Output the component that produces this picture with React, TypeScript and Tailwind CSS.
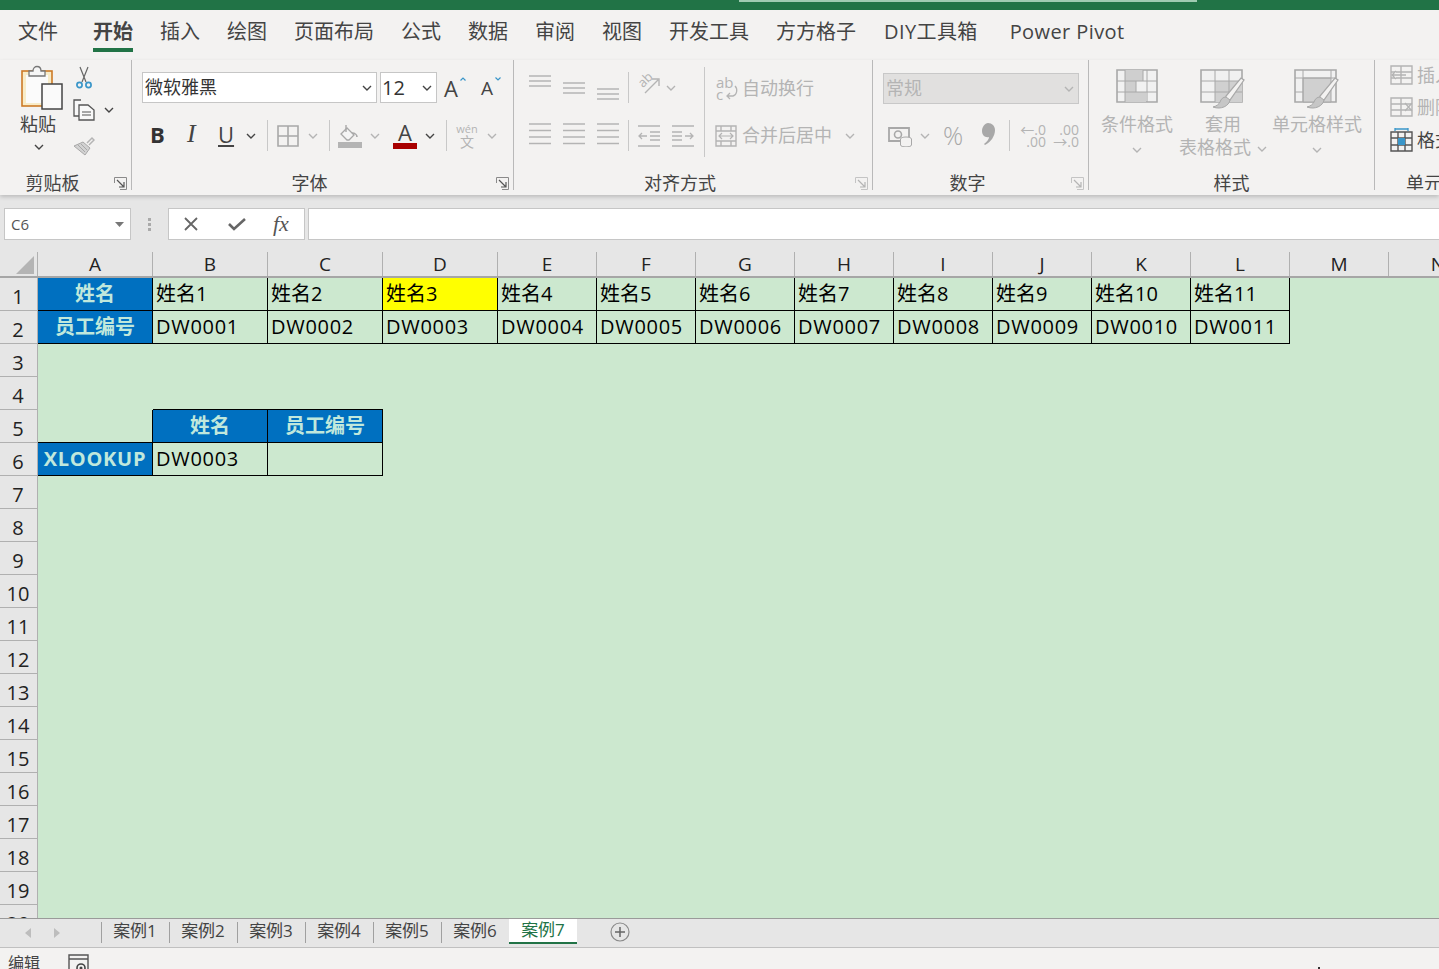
import type { ReactNode } from 'react'

const DIS = '#b4b4b4'
const DARK = '#444444'

const tabs = ['文件', '开始', '插入', '绘图', '页面布局', '公式', '数据', '审阅', '视图', '开发工具', '方方格子', 'DIY工具箱', 'Power Pivot']

function Chevron({ color = DARK, className = '' }: { color?: string; className?: string }) {
  return (
    <svg width="10" height="6" viewBox="0 0 10 6" className={className}>
      <path d="M1 1l4 4 4-4" fill="none" stroke={color} strokeWidth="1.4" />
    </svg>
  )
}

function Launcher({ off }: { off?: boolean }) {
  return (
    <svg width="13" height="13" viewBox="0 0 13 13" className="absolute right-[4px] top-[6px]">
      <path d="M.5 6V.5H12.5V12.5H6" fill="none" stroke={off ? '#c4c4c4' : '#8a8a8a'} />
      <path d="M3 3l7 7M10 5v5H5" fill="none" stroke={off ? DIS : '#555'} strokeWidth="1.2" />
    </svg>
  )
}

function Group({ label, w, launcher, off, children }: { label: string; w: string; launcher?: boolean; off?: boolean; children: ReactNode }) {
  return (
    <div className={`${w} shrink-0 h-[130px] flex flex-col border-r border-[#b9b9b9]`}>
      <div className="h-[111px] flex shrink-0">{children}</div>
      <div className={`relative flex-1 text-center text-[18px] leading-[24px] text-[#444] ${launcher ? 'pr-[26px]' : ''}`}>
        {label}
        {launcher && <Launcher off={off} />}
      </div>
    </div>
  )
}

function VSep({ className = 'h-[31px]' }: { className?: string }) {
  return <div className={`w-px bg-[#c8c8c8] shrink-0 ${className}`} />
}

function Lines({ starts, top, gap }: { starts: number[]; top: number; gap: number }) {
  return (
    <svg width="22" height="31" viewBox="0 0 22 31" className="shrink-0">
      {starts.map((s, i) => (
        <path key={i} d={`M${s} ${top + i * gap}H22`} stroke={DIS} strokeWidth="1.5" />
      ))}
    </svg>
  )
}

function PasteIcon() {
  return (
    <svg width="42" height="45" viewBox="0 0 42 45">
      <rect x="1" y="6" width="30" height="35" fill="#f8ecc8" stroke="#cc7a26" strokeWidth="1.6" />
      <rect x="5" y="10" width="22" height="28" fill="#fbfbfb" />
      <path d="M8 6h4c0-6 8-6 8 0h4v5H8z" fill="#f6f6f6" stroke="#777" strokeWidth="1.3" />
      <rect x="21" y="19" width="20" height="25" fill="#fafafa" stroke="#444" strokeWidth="1.5" />
    </svg>
  )
}

function ScissorIcon() {
  return (
    <svg width="18" height="24" viewBox="0 0 18 24">
      <path d="M5 1l6 15M13 1L7 16" stroke="#666" strokeWidth="1.2" fill="none" />
      <circle cx="4.5" cy="19" r="2.6" fill="none" stroke="#3a96c9" strokeWidth="1.7" />
      <circle cx="13.5" cy="19" r="2.6" fill="none" stroke="#3a96c9" strokeWidth="1.7" />
    </svg>
  )
}

function CopyIcon() {
  return (
    <svg width="22" height="22" viewBox="0 0 22 22">
      <path d="M8 1H1v16h5" fill="#f8f8f8" stroke="#555" strokeWidth="1.3" />
      <path d="M6 6h9l6 5v10H6z" fill="#f8f8f8" stroke="#555" strokeWidth="1.3" />
      <path d="M9 13h9M9 16h9" stroke="#555" />
    </svg>
  )
}

function BrushIcon() {
  return (
    <svg width="22" height="20" viewBox="0 0 22 20">
      <path d="M14 7l5-5 2 2-5 5" fill="none" stroke={DIS} strokeWidth="1.5" />
      <path d="M1 10l9-4 7 6-5 7z" fill="#d2d2d2" stroke="#a8a8a8" />
      <path d="M5 9l7 7M8 8l6 6" stroke="#a8a8a8" />
    </svg>
  )
}

function BorderIcon() {
  return (
    <svg width="22" height="22" viewBox="0 0 22 22">
      <path d="M1 1h20v20H1zM11 1v20M1 11h20" fill="none" stroke="#a8a8a8" strokeWidth="1.6" />
    </svg>
  )
}

function FillIcon() {
  return (
    <svg width="24" height="24" viewBox="0 0 24 24">
      <path d="M3 10l6-6 7 7-5 5H9z" fill="#f4f4f4" stroke="#a8a8a8" strokeWidth="1.3" />
      <path d="M8 1v7" stroke="#a8a8a8" strokeWidth="1.4" />
      <path d="M14 9c3 0 5 2 5 4" fill="none" stroke="#a8a8a8" strokeWidth="1.6" />
      <rect y="18" width="24" height="6" fill={DIS} />
    </svg>
  )
}

function OrientIcon() {
  return (
    <svg width="22" height="24" viewBox="0 0 22 24">
      <text x="1" y="13" fontSize="13" fill={DIS} transform="rotate(-45 7 10)" fontFamily="Open Sans">ab</text>
      <path d="M7 21L20 8M14 7h7v7" fill="none" stroke={DIS} strokeWidth="1.4" />
    </svg>
  )
}

function IndentIcon({ flip }: { flip?: boolean }) {
  return (
    <svg width="22" height="22" viewBox="0 0 22 22" className={flip ? '-scale-x-100' : ''}>
      <path d="M0 1h22M12 7h10M12 11h10M12 15h10M0 21h22" stroke={DIS} strokeWidth="1.4" />
      <path d="M9 11H1M4 8l-3 3 3 3" fill="none" stroke={DIS} strokeWidth="1.3" />
    </svg>
  )
}

function WrapIcon() {
  return (
    <svg width="22" height="24" viewBox="0 0 22 24" className="shrink-0">
      <text x="0" y="11" fontSize="15" fill={DIS} fontFamily="Open Sans">ab</text>
      <text x="0" y="23" fontSize="15" fill={DIS} fontFamily="Open Sans">c</text>
      <path d="M19 9c3 3 2 9-2 10h-6M14 16l-3 3 3 3" fill="none" stroke={DIS} strokeWidth="1.3" />
    </svg>
  )
}

function MergeIcon() {
  return (
    <svg width="22" height="22" viewBox="0 0 22 22" className="shrink-0 -ml-[1px]">
      <path d="M1 1h20v20H1zM1 6h20M1 16h20M6 1v5M6 16v5M16 1v5M16 16v5" fill="none" stroke={DIS} strokeWidth="1.4" />
      <path d="M4 11h14M7 8l-3 3 3 3M15 8l3 3-3 3" fill="none" stroke={DIS} strokeWidth="1.2" />
    </svg>
  )
}

function MoneyIcon() {
  return (
    <svg width="24" height="22" viewBox="0 0 24 22">
      <path d="M1 3h20v13H1z" fill="none" stroke="#a8a8a8" strokeWidth="1.8" />
      <circle cx="10" cy="9.5" r="3.5" fill="none" stroke="#a8a8a8" strokeWidth="1.6" />
      <ellipse cx="18" cy="14" rx="5.5" ry="2" fill="#f3f2f1" stroke="#a8a8a8" />
      <path d="M12.500 14v6c0 2.500 11 2.500 11 0v-6" fill="#f3f2f1" stroke="#a8a8a8" />
    </svg>
  )
}

function CommaIcon() {
  return (
    <svg width="13" height="22" viewBox="0 0 13 22">
      <path d="M6 0c4 0 7 3 7 7 0 6-4 12-10 15l-1-1c3-2 5-5 5-7-4 1-7-2-7-6 0-4 3-8 6-8z" fill="#a8a8a8" />
    </svg>
  )
}

function CondIcon() {
  return (
    <svg width="42" height="34" viewBox="0 0 42 34">
      <path d="M1 1h40v32H1z" fill="#f1f1f1" stroke="#a8a8a8" strokeWidth="1.6" />
      <path d="M9 1h18v11H9zM9 12h11v11H9zM9 23h21v10H9z" fill="#cfcfcf" />
      <path d="M9 1v32M31 1v32M1 12h40M1 23h40M20 12v11M27 1v11" stroke="#a8a8a8" fill="none" />
    </svg>
  )
}

function TableBrush({ cell }: { cell?: boolean }) {
  return (
    <svg width="46" height="42" viewBox="0 0 46 42">
      <path d="M1 1h41v32H1z" fill="#f1f1f1" stroke="#a8a8a8" strokeWidth="1.6" />
      {cell ? (
        <path d="M9 9h28v24H9z" fill="#d0d0d0" stroke="#a8a8a8" />
      ) : (
        <path d="M15 12h27v21H15z" fill="#d0d0d0" />
      )}
      {cell ? (
        <path d="M1 9h41M9 1v32M37 1v8M1 23h8" stroke="#a8a8a8" fill="none" />
      ) : (
        <path d="M1 12h41M1 23h41M15 1v32M29 1v32" stroke="#a8a8a8" fill="none" />
      )}
      <path d="M44 11L30 31c-3 1-5-2-4-4L41 9z" fill="#f3f2f1" stroke="#a8a8a8" strokeWidth="1.3" />
      <path d="M26 28c-3 0-5 2-6 5-1 2-3 4-7 5 8 3 16-1 17-7z" fill="#c6c6c6" stroke="#a8a8a8" />
    </svg>
  )
}

function CellIcon({ kind }: { kind: 'insert' | 'delete' | 'format' }) {
  if (kind === 'format') {
    return (
      <svg width="23" height="24" viewBox="0 0 23 24" className="shrink-0">
        <path d="M5 1h13M5 0v3M18 0v3" stroke="#3a96c9" strokeWidth="1.3" />
        <path d="M1 4h21v19H1zM1 10h21M1 17h21M8 4v19M15 4v19" fill="none" stroke="#555" strokeWidth="1.4" />
        <rect x="8" y="10" width="7" height="7" fill="#3a96c9" />
      </svg>
    )
  }
  return (
    <svg width="23" height="20" viewBox="0 0 23 20" className="shrink-0">
      <path d="M1 1h21v18H1zM1 7h21M1 13h21M11 1v18" fill="none" stroke={DIS} strokeWidth="1.4" />
      {kind === 'insert' ? (
        <path d="M16 10H2M6 6l-4 4 4 4" fill="#f3f2f1" stroke={DIS} strokeWidth="1.3" />
      ) : (
        <path d="M15 6l7 8M22 6l-7 8" stroke={DIS} strokeWidth="1.3" fill="none" />
      )}
    </svg>
  )
}

function Ribbon() {
  return (
    <div className="h-[135px] flex shrink-0 shadow-[0_2px_4px_rgba(0,0,0,0.18)] relative z-10 bg-[#f3f2f1]">
      <Group label="剪贴板" w="w-[132px]" launcher>
        <div className="w-[73px] flex flex-col items-center pl-[11px] pt-[5px] shrink-0">
          <PasteIcon />
          <div className="text-[18px] leading-[24px] mt-[2px] mr-[8px] text-[#444]">粘贴</div>
          <Chevron className="mt-[8px] mr-[6px]" />
        </div>
        <div className="flex flex-col pt-[6px]">
          <div className="pl-[2px]"><ScissorIcon /></div>
          <div className="flex items-center mt-[9px]">
            <CopyIcon />
            <Chevron className="ml-[9px]" />
          </div>
          <div className="mt-[15px]"><BrushIcon /></div>
        </div>
      </Group>

      <Group label="字体" w="w-[382px]" launcher>
        <div className="flex flex-col pl-[10px] pt-[12px]">
          <div className="flex items-center h-[31px]">
            <div className="w-[235px] h-[31px] bg-white border border-[#c6c6c6] flex items-center justify-between pl-[2px] pr-[4px] text-[18px] text-[#333]">
              <span>微软雅黑</span>
              <Chevron />
            </div>
            <div className="w-[57px] h-[31px] ml-[3px] bg-white border border-[#c6c6c6] flex items-center justify-between pl-[1px] pr-[4px] text-[20px] text-[#333]">
              <span>12</span>
              <Chevron />
            </div>
            <div className="relative ml-[7px] w-[22px] text-[22px] leading-[24px] text-[#444]">
              A
              <svg width="6" height="4" viewBox="0 0 6 4" className="absolute left-[16px] top-[1px]"><path d="M.5 3.500L3 1l2.500 2.500" fill="none" stroke="#3a96c9" strokeWidth="1.2" /></svg>
            </div>
            <div className="relative ml-[15px] w-[20px] text-[19px] leading-[24px] text-[#444]">
              A
              <svg width="6" height="4" viewBox="0 0 6 4" className="absolute left-[14px] top-[1px]"><path d="M.5 .5L3 3l2.500-2.500" fill="none" stroke="#3a96c9" strokeWidth="1.2" /></svg>
            </div>
          </div>
          <div className="flex items-center h-[31px] mt-[17px]">
            <span className="ml-[8px] w-[16px] mb-[4px] text-[22px] font-bold text-[#333] leading-none">B</span>
            <span className="ml-[19px] w-[14px] mb-[4px] pl-[2px] text-[26px] italic text-[#444] leading-none font-['Liberation_Serif',serif]">I</span>
            <span className="ml-[19px] w-[17px] mb-[4px] text-[22px] underline underline-offset-2 text-[#444] leading-none">U</span>
            <Chevron className="ml-[11px]" />
            <VSep className="h-[31px] ml-[11px]" />
            <div className="ml-[9px]"><BorderIcon /></div>
            <Chevron color={DIS} className="ml-[9px]" />
            <VSep className="h-[31px] ml-[11px]" />
            <div className="ml-[8px]"><FillIcon /></div>
            <Chevron color={DIS} className="ml-[8px]" />
            <div className="ml-[13px] w-[24px] flex flex-col items-center leading-none">
              <span className="text-[22px] leading-[20px] text-[#444]">A</span>
              <span className="w-[24px] h-[6px] bg-[#a80000] mt-[1px]" />
            </div>
            <Chevron className="ml-[8px]" />
            <VSep className="h-[31px] ml-[11px]" />
            <div className="ml-[10px] w-[20px] flex flex-col items-center text-[#b4b4b4]">
              <span className="text-[11px] leading-[11px]">wén</span>
              <span className="text-[14px] leading-[15px]">文</span>
            </div>
            <Chevron color={DIS} className="ml-[10px]" />
          </div>
        </div>
      </Group>

      <Group label="对齐方式" w="w-[359px]" launcher off>
        <div className="flex flex-col pl-[15px] pt-[12px]">
          <div className="flex h-[31px]">
            <Lines starts={[0, 0, 0]} top={4} gap={5} />
            <div className="ml-[12px]"><Lines starts={[0, 0, 0]} top={11} gap={5} /></div>
            <div className="ml-[12px]"><Lines starts={[0, 0, 0]} top={17} gap={5} /></div>
            <VSep className="h-[31px] ml-[9px]" />
            <div className="ml-[9px]"><OrientIcon /></div>
            <Chevron color={DIS} className="ml-[6px] mt-[13px]" />
          </div>
          <div className="flex items-center h-[31px] mt-[17px]">
            <Lines starts={[0, 0, 0, 0]} top={4} gap={6.5} />
            <div className="ml-[12px]"><Lines starts={[0, 0, 0, 0]} top={4} gap={6.5} /></div>
            <div className="ml-[12px]"><Lines starts={[0, 0, 0, 0]} top={4} gap={6.5} /></div>
            <VSep className="h-[31px] ml-[9px]" />
            <div className="ml-[9px]"><IndentIcon /></div>
            <div className="ml-[12px]"><IndentIcon flip /></div>
          </div>
        </div>
        <VSep className="h-[90px] mt-[7px] ml-[10px]" />
        <div className="flex flex-col pl-[11px] pt-[12px] text-[18px] text-[#b4b4b4]">
          <div className="flex items-center h-[31px] gap-[4px] pt-[2px]">
            <WrapIcon />
            <span>自动换行</span>
          </div>
          <div className="flex items-center h-[31px] mt-[17px] gap-[5px]">
            <MergeIcon />
            <span>合并后居中</span>
            <Chevron color={DIS} className="ml-[8px]" />
          </div>
        </div>
      </Group>

      <Group label="数字" w="w-[216px]" launcher off>
        <div className="flex flex-col pl-[10px] pt-[13px]">
          <div className="w-[196px] h-[31px] bg-[#e1e0df] border border-[#c8c8c8] flex items-center justify-between pl-[2px] pr-[4px] text-[18px] text-[#b4b4b4]">
            <span>常规</span>
            <Chevron color={DIS} />
          </div>
          <div className="flex items-center h-[31px] mt-[16px] text-[#b4b4b4]">
            <div className="ml-[5px]"><MoneyIcon /></div>
            <Chevron color={DIS} className="ml-[8px]" />
            <span className="ml-[13px] w-[23px] text-[25px] leading-none text-[#a8a8a8] font-light">%</span>
            <div className="ml-[16px] mb-[4px]"><CommaIcon /></div>
            <VSep className="h-[31px] ml-[14px]" />
            <div className="ml-[10px] w-[26px] text-[14px] leading-[12px] text-right">
              <div>←.0</div>
              <div>.00</div>
            </div>
            <div className="ml-[7px] w-[26px] text-[14px] leading-[12px] text-right">
              <div>.00</div>
              <div>→.0</div>
            </div>
          </div>
        </div>
      </Group>

      <Group label="样式" w="w-[286px]">
        <div className="flex text-[18px] leading-[23px] text-[#b4b4b4] pt-[9px]">
          <div className="w-[96px] flex flex-col items-center">
            <CondIcon />
            <span className="mt-[10px]">条件格式</span>
            <Chevron color={DIS} className="mt-[11px]" />
          </div>
          <div className="w-[76px] flex flex-col items-center">
            <TableBrush />
            <span className="mt-[2px]">套用</span>
            <span className="whitespace-nowrap">表格格式<Chevron color={DIS} className="inline ml-[6px]" /></span>
          </div>
          <div className="w-[112px] flex flex-col items-center">
            <TableBrush cell />
            <span className="mt-[2px] whitespace-nowrap">单元格样式</span>
            <Chevron color={DIS} className="mt-[11px]" />
          </div>
        </div>
      </Group>

      <div className="flex-1 h-[130px] flex flex-col overflow-hidden">
        <div className="h-[111px] shrink-0 flex flex-col pl-[15px] pt-[5px] text-[18px] whitespace-nowrap">
          <div className="flex items-center gap-[4px] h-[20px] text-[#b4b4b4]"><CellIcon kind="insert" />插入</div>
          <div className="flex items-center gap-[4px] h-[20px] mt-[12px] text-[#b4b4b4]"><CellIcon kind="delete" />删除</div>
          <div className="flex items-center gap-[4px] h-[24px] mt-[11px] text-[#444]"><CellIcon kind="format" />格式</div>
        </div>
        <div className="text-[18px] leading-[24px] text-[#444] pl-[31px] whitespace-nowrap">单元格</div>
      </div>
    </div>
  )
}

function FormulaBar() {
  return (
    <div className="h-[53px] shrink-0 flex items-start pt-[13px] pl-[4px] bg-[#e6e6e6] text-[#555]">
      <div className="w-[127px] h-[32px] bg-white border border-[#c6c6c6] flex items-center justify-between pl-[6px] pr-[6px] text-[15px]">
        <span>C6</span>
        <svg width="9" height="5" viewBox="0 0 9 5"><path d="M0 0h9L4.500 5z" fill="#777" /></svg>
      </div>
      <div className="w-[37px] h-[32px] flex flex-col items-center justify-center gap-[2px]">
        <span className="w-[3px] h-[3px] bg-[#aaa]" />
        <span className="w-[3px] h-[3px] bg-[#aaa]" />
        <span className="w-[3px] h-[3px] bg-[#aaa]" />
      </div>
      <div className="w-[137px] h-[32px] bg-white border border-[#c6c6c6] flex items-center pl-[14px]">
        <svg width="16" height="16" viewBox="0 0 16 16"><path d="M2 2l12 12M14 2L2 14" stroke="#666" strokeWidth="1.8" /></svg>
        <svg width="18" height="14" viewBox="0 0 18 14" className="ml-[29px]"><path d="M1 7l5 5L17 2" fill="none" stroke="#666" strokeWidth="2.6" /></svg>
        <span className="ml-[27px] text-[22px] leading-none italic font-['Liberation_Serif',serif] text-[#555]">fx</span>
      </div>
      <div className="flex-1 h-[32px] ml-[3px] -mr-[2px] bg-white border border-[#c6c6c6]" />
    </div>
  )
}

type Cell = { text?: string; tone?: 'blue' | 'yellow'; r?: boolean; b?: boolean; wide?: boolean }

const names = ['姓名1', '姓名2', '姓名3', '姓名4', '姓名5', '姓名6', '姓名7', '姓名8', '姓名9', '姓名10', '姓名11']
const ids = ['DW0001', 'DW0002', 'DW0003', 'DW0004', 'DW0005', 'DW0006', 'DW0007', 'DW0008', 'DW0009', 'DW0010', 'DW0011']
const colLetters = ['A', 'B', 'C', 'D', 'E', 'F', 'G', 'H', 'I', 'J', 'K', 'L', 'M', 'N']

const empty = (n: number): Cell[] => Array.from({ length: n }, () => ({}))

const rows: Cell[][] = [
  [{ text: '姓名', tone: 'blue', r: true, b: true }, ...names.map((t, i) => ({ text: t, r: true, b: true, tone: i === 2 ? ('yellow' as const) : undefined })), {}, {}],
  [{ text: '员工编号', tone: 'blue', r: true, b: true }, ...ids.map((t) => ({ text: t, r: true, b: true, wide: true })), {}, {}],
  empty(14),
  [{}, { b: true }, { b: true }, ...empty(11)],
  [{ r: true, b: true }, { text: '姓名', tone: 'blue', r: true, b: true }, { text: '员工编号', tone: 'blue', r: true, b: true }, ...empty(11)],
  [{ text: 'XLOOKUP', tone: 'blue', r: true, b: true, wide: true }, { text: 'DW0003', r: true, b: true, wide: true }, { r: true, b: true }, ...empty(11)],
  ...Array.from({ length: 14 }, () => empty(14)),
]

function GridCell({ cell }: { cell: Cell }) {
  const bg = cell.tone === 'blue' ? 'bg-[#0070c0] justify-center font-bold text-[#c0e8dc]' : cell.tone === 'yellow' ? 'bg-[#ffff00] pl-[3px] text-black' : 'pl-[3px] text-black'
  return (
    <div className={`h-[33px] flex items-center text-[20px] whitespace-nowrap overflow-hidden ${bg} ${cell.wide ? 'tracking-[0.7px]' : ''} ${cell.r ? 'border-r border-black' : ''} ${cell.b ? 'border-b border-black' : ''}`}>
      {cell.text}
    </div>
  )
}

function Sheet() {
  return (
    <div className="flex-1 min-h-0 overflow-hidden bg-[#cce8cf] grid grid-cols-[38px_115px_115px_115px_115px_repeat(10,99px)] auto-rows-min">
      <div className="h-[30px] bg-[#e6e6e6] border-b-2 border-[#a6a6a6] pt-[4px]">
        <div className="h-full border-r border-[#b0b0b0] relative">
          <svg width="18" height="18" viewBox="0 0 18 18" className="absolute left-[16px] top-[4px]"><path d="M18 0v18H0z" fill="#b4b4b4" /></svg>
        </div>
      </div>
      {colLetters.map((c) => (
        <div key={c} className="h-[30px] bg-[#e6e6e6] border-b-2 border-[#a6a6a6] pt-[4px]">
          <div className="h-full border-r border-[#b0b0b0] flex items-center justify-center text-[19px] text-[#222]">{c}</div>
        </div>
      ))}
      {rows.map((row, i) => [
        <div key={`h${i}`} className="h-[33px] bg-[#e6e6e6] border-r border-b border-[#b0b0b0] flex items-center justify-center pt-[5px] pr-[1px] text-[20px] text-[#222]">
          {i + 1}
        </div>,
        ...row.map((cell, j) => <GridCell key={`${i}-${j}`} cell={cell} />),
      ])}
    </div>
  )
}

function SheetTabs() {
  return (
    <div className="h-[30px] shrink-0 bg-[#e6e6e6] border-t border-t-[#9a9a9a] border-b border-b-[#c0c0c0] flex items-start relative z-10">
      <div className="w-[101px] h-full flex items-center pl-[25px] gap-[23px] shrink-0">
        <svg width="6" height="10" viewBox="0 0 6 10"><path d="M6 0v10L0 5z" fill="#bdbdbd" /></svg>
        <svg width="6" height="10" viewBox="0 0 6 10"><path d="M0 0v10l6-5z" fill="#bdbdbd" /></svg>
      </div>
      {['案例1', '案例2', '案例3', '案例4', '案例5', '案例6'].map((t) => (
        <div key={t} className="w-[68px] h-[21px] mt-[3px] border-l border-[#a0a0a0] flex items-center justify-center pb-[4px] pr-[1px] text-[17px] text-[#444]">
          {t}
        </div>
      ))}
      <div className="w-[68px] h-[25px] bg-white border-b-2 border-[#217346] flex items-center justify-center pb-[1px] text-[17px] text-[#217346]">
        案例7
      </div>
      <svg width="20" height="20" viewBox="0 0 20 20" className="ml-[33px] mt-[3px]">
        <circle cx="10" cy="10" r="9" fill="none" stroke="#8a8a8a" strokeWidth="1.2" />
        <path d="M10 5v10M5 10h10" stroke="#666" strokeWidth="1.5" />
      </svg>
    </div>
  )
}

function StatusBar() {
  return (
    <div className="h-[21px] shrink-0 bg-[#f3f2f1] flex items-start overflow-hidden relative">
      <span className="ml-[8px] mt-[4px] text-[16px] leading-[22px] text-[#444]">编辑</span>
      <svg width="22" height="22" viewBox="0 0 22 22" className="ml-[28px] mt-[6px]">
        <path d="M1 1h19v20H1zM1 5h19" fill="none" stroke="#555" strokeWidth="1.4" />
        <circle cx="13" cy="14" r="4" fill="none" stroke="#444" strokeWidth="1.6" />
        <circle cx="13" cy="14" r="1.500" fill="#444" />
      </svg>
      <span className="absolute left-[1318px] top-[19px] w-[2px] h-[2px] bg-[#333]" />
    </div>
  )
}

export default function App() {
  return (
    <div className="w-[1439px] h-[969px] overflow-hidden flex flex-col bg-[#f3f2f1] font-['Open_Sans','Noto_Sans_CJK_SC',sans-serif]">
      <div className="h-[10px] bg-[#217346] shrink-0 pl-[739px]">
        <div className="w-[458px] h-[2px] bg-[#a0cbb2]" />
      </div>
      <div className="h-[50px] shrink-0 flex items-start pl-[18px] gap-[27px] pt-[8px] text-[20px] leading-[28px] text-[#444] whitespace-nowrap">
        {tabs.map((t) => (
          <div key={t} className={`relative ${t === '开始' ? 'font-bold ml-[8px]' : ''} ${t === 'DIY工具箱' ? 'ml-[1px] tracking-[0.4px]' : ''} ${t === 'Power Pivot' ? 'ml-[5px] tracking-[0.4px]' : ''}`}>
            {t}
            {t === '开始' && <div className="absolute left-0 right-0 top-[30px] h-[4px] bg-[#217346]" />}
          </div>
        ))}
      </div>
      <Ribbon />
      <FormulaBar />
      <Sheet />
      <SheetTabs />
      <StatusBar />
    </div>
  )
}
